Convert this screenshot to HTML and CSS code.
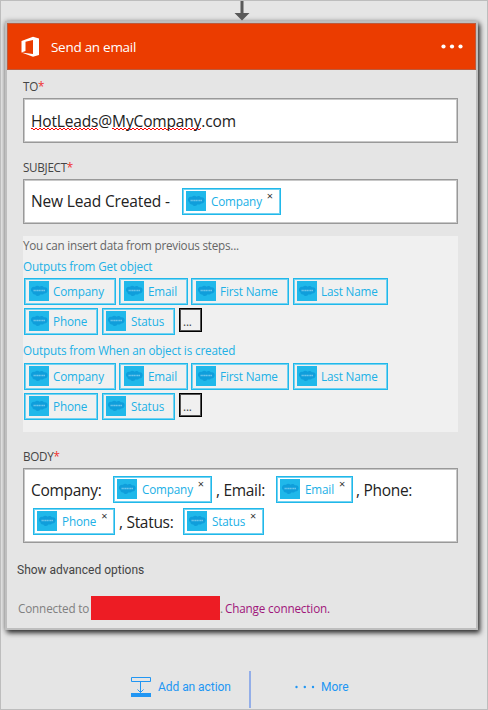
FILE: index.html
```html
<!DOCTYPE html>
<html lang="en">
<head>
<meta charset="utf-8">
<title>Send an email</title>
<link rel="stylesheet" href="styles.css">
</head>
<body>
<svg class="defs" width="0" height="0" aria-hidden="true">
  <symbol id="sf" viewBox="0 0 20 20">
    <rect width="20" height="20" fill="#20b8ea"/>
    <path d="M2 9.500C1.600 7.200 3.500 5.400 5.800 5.900C7.200 4.300 9.400 4.400 10.400 5.700C12 4.500 14 4.800 14.800 6.300C17 5.700 18.800 7 18.600 9.200C18.400 11.500 16.800 12.700 15 12.400C14.200 13.600 12.700 13.900 11.600 13.300C10.400 15.400 7.400 15.500 6.400 13.400C4.600 13.700 3.300 12.700 3.400 11.300C2.600 11 2.200 10.400 2 9.500Z" fill="#0f9edb"/>
    <path d="M4.500 9.500h11.500" stroke="#8fd3f0" stroke-width="1.600" stroke-dasharray="1.400 .3" opacity=".75"/>
  </symbol>
</svg>
<main class="canvas">
  <svg class="arrow" width="16" height="20" viewBox="0 0 16 20"><path d="M6.500 0h3v12H15.500L8 19.500L.5 12H6.500Z" fill="#595959"/></svg>
  <section class="card">
    <header class="head">
      <svg class="office" width="19" height="22" viewBox="0 0 19 22"><path fill="#fff" fill-rule="evenodd" d="M0.500 5L12 .8L18 2.500V19L12 20.800L.5 16.600L12 18V4L4.500 5.800V15L.5 16.600Z"/></svg>
      <h1 class="title"><span class="t-title">Send an email</span></h1>
      <svg class="dots" width="22" height="5" viewBox="0 0 22 5" fill="#fff"><circle cx="2.500" cy="2.500" r="2.100"/><circle cx="11" cy="2.500" r="2.100"/><circle cx="19.500" cy="2.500" r="2.100"/></svg>
    </header>
    <div class="form">
      <div class="label l-to"><span>TO</span><i>*</i></div>
      <div class="input"><span class="big t-mail"><span class="sq">HotLeads</span>@<span class="sq">MyCompany</span>.com</span></div>
      <div class="label l-subject"><span>SUBJECT</span><i>*</i></div>
      <div class="input"><span class="big w-new">New Lead Created -</span><span class="chip x c-company"><svg class="ico"><use href="#sf"/></svg><span>Company</span><b>×</b></span></div>
      <div class="panel">
        <p class="hint">You can insert data from previous steps...</p>
        <p class="out">Outputs from Get object</p>
        <div class="chips">
          <span class="chip p-company"><svg class="ico"><use href="#sf"/></svg><span>Company</span></span><span class="chip p-email"><svg class="ico"><use href="#sf"/></svg><span>Email</span></span><span class="chip p-first"><svg class="ico"><use href="#sf"/></svg><span>First Name</span></span><span class="chip p-last"><svg class="ico"><use href="#sf"/></svg><span>Last Name</span></span>
        </div>
        <div class="chips">
          <span class="chip p-phone"><svg class="ico"><use href="#sf"/></svg><span>Phone</span></span><span class="chip p-status"><svg class="ico"><use href="#sf"/></svg><span>Status</span></span><span class="more">...</span>
        </div>
        <p class="out out2">Outputs from When an object is created</p>
        <div class="chips">
          <span class="chip p-company"><svg class="ico"><use href="#sf"/></svg><span>Company</span></span><span class="chip p-email"><svg class="ico"><use href="#sf"/></svg><span>Email</span></span><span class="chip p-first"><svg class="ico"><use href="#sf"/></svg><span>First Name</span></span><span class="chip p-last"><svg class="ico"><use href="#sf"/></svg><span>Last Name</span></span>
        </div>
        <div class="chips">
          <span class="chip p-phone"><svg class="ico"><use href="#sf"/></svg><span>Phone</span></span><span class="chip p-status"><svg class="ico"><use href="#sf"/></svg><span>Status</span></span><span class="more">...</span>
        </div>
      </div>
      <div class="label l-body"><span>BODY</span><i>*</i></div>
      <div class="input body">
        <div class="line"><span class="big w-co">Company:</span><span class="chip x c-company"><svg class="ico"><use href="#sf"/></svg><span>Company</span><b>×</b></span><span class="big w-em">, Email:</span><span class="chip x c-email"><svg class="ico"><use href="#sf"/></svg><span>Email</span><b>×</b></span><span class="big w-ph">, Phone:</span></div>
        <div class="line line2"><span class="chip x c-phone"><svg class="ico"><use href="#sf"/></svg><span>Phone</span><b>×</b></span><span class="big w-st">, Status:</span><span class="chip x c-status"><svg class="ico"><use href="#sf"/></svg><span>Status</span><b>×</b></span></div>
      </div>
    </div>
    <div class="advanced">Show advanced options</div>
    <div class="conn"><span class="w-conn">Connected to</span><span class="redact"></span><span class="dot">.</span><a class="t-change">Change connection.</a></div>
  </section>
  <footer class="actions">
    <a class="add"><svg width="20" height="20" viewBox="0 0 20 20" fill="none" stroke="#2196f3"><path d="M.5 .5h19v4H.5ZM9.500 4.500v11M6.500 12.500l3 3l3-3"/><path d="M0 16h20v4H0Z" fill="#2196f3" stroke="none"/></svg><span>Add an action</span></a>
    <a class="moreact"><svg width="20" height="4" viewBox="0 0 20 4" fill="#2196f3"><circle cx="1.500" cy="2" r="1.200"/><circle cx="9.800" cy="2" r="1.200"/><circle cx="18" cy="2" r="1.200"/></svg><span>More</span></a>
  </footer>
</main>
</body>
</html>
```
FILE: styles.css
```css
* { box-sizing: border-box; }
body { margin: 0; font-family: "Open Sans", "Noto Sans", sans-serif; font-size: 11.7px; letter-spacing: -.15px; color: #444; }
h1, p { margin: 0; font-weight: 400; }
span, a { white-space: nowrap; }
.defs { display: block; height: 0; }
.canvas { width: 488px; height: 710px; background: #e5e5e5; border: 1px solid #bdbdbd; overflow: hidden; }
.arrow { display: block; margin-left: 233px; height: 20px; }
.card { width: 473px; height: 609px; margin-left: 4px; border: 2px solid #bebebe; background: #e5e5e5; box-shadow: 2px 3px 5px 0 rgba(0,0,0,.75), 0 0 5px rgba(0,0,0,.3); }
.head { display: flex; align-items: center; height: 47px; padding: 1px 12px 0 13px; background: #eb3c00; border: 1px solid #bd5a3c; }
.title { flex: 1; margin-left: 11px; font-size: 13.5px; letter-spacing: -.28px; line-height: 20px; color: #fff; }
.dots { margin-bottom: 2px; }
.form { width: 435px; margin-left: 16px; }
.label { display: flex; line-height: 16px; color: #444; letter-spacing: -.3px; }
.label i { font-style: normal; color: #f03030; }
.l-to { height: 28px; padding-top: 8px; }
.l-subject { height: 36px; padding-top: 16px; }
.l-body { height: 36px; padding-top: 16px; }
.input { display: flex; align-items: center; height: 45px; padding-left: 7px; border: 1px solid #999; outline: 1px solid #c8c8c8; outline-offset: -2px; background: #fff; }
.big { flex: none; font-size: 15.5px; line-height: 24px; letter-spacing: -.15px; color: #222; }
.w-new { width: 151px; padding-bottom: 2px; }
.sq { background: repeating-linear-gradient(90deg, #f00 0 2px, transparent 2px 4px) 0 18px / 100% 1px no-repeat, repeating-linear-gradient(90deg, transparent 0 2px, #f00 2px 4px) 0 19px / 100% 1px no-repeat; }
.chip { display: inline-flex; flex: none; align-items: center; height: 27px; padding-left: 4px; border: 1px solid #20b8ea; outline: 1px solid #74d2f1; outline-offset: -2px; color: #20b0e6; }
.chip > span { padding-bottom: 2px; }
.ico { width: 20px; height: 20px; flex: none; align-self: flex-start; margin: 2px 4px 0 0; }
.x { padding-left: 3px; }
.x .ico { margin-right: 5px; }
.line .chip > span { padding-bottom: 1px; }
.chip b { font-weight: 400; font-size: 11px; line-height: 10px; color: #333; align-self: flex-start; margin: 2px 0 0 5px; }
.c-company { width: 99px; }
.c-email { width: 77px; }
.c-phone { width: 82px; }
.c-status { width: 81px; }
.panel { height: 196px; margin-top: 12px; background: #f0f0f0; }
.hint { height: 20px; line-height: 18px; letter-spacing: -.23px; color: #666; }
.out { height: 22px; line-height: 20px; color: #20b0e6; }
.out2 { height: 25px; line-height: 25px; }
.chips { display: flex; height: 30px; padding-left: 1px; }
.p-company { width: 92px; margin-right: 3px; }
.p-email { width: 69px; margin-right: 3px; }
.p-first { width: 98px; margin-right: 4px; }
.p-last { width: 95px; }
.p-phone { width: 74px; margin-right: 4px; }
.p-status { width: 73px; margin-right: 4px; }
.p-status, .p-last { padding-left: 3px; }
.p-status .ico { margin-right: 5px; }
.more { width: 23px; height: 24px; border: 1px solid #000; outline: 1px solid #555; outline-offset: -2px; padding-left: 3px; line-height: 25px; color: #444; }
.body { display: block; height: 75px; padding-top: 7px; }
.line { display: flex; align-items: center; height: 27px; }
.line .big { letter-spacing: -.3px; }
.line2 { margin: 5px 0 0 2px; }
.w-co { width: 82px; }
.w-em { width: 64px; padding-left: 4px; }
.w-ph { padding-left: 3px; }
.w-st { width: 68px; padding-left: 4px; }
.advanced { margin: 17px 0 0 10px; height: 20px; line-height: 20px; font-family: Roboto, sans-serif; font-size: 12px; letter-spacing: 0; color: #444; }
.conn { display: flex; height: 24px; margin: 16px 0 0 11px; line-height: 25px; color: #808080; }
.w-conn { width: 73px; }
.redact { width: 129px; height: 24px; background: #ed1c24; }
.dot { width: 5px; }
.t-change { color: #a0157a; }
.actions { display: flex; height: 37px; margin-top: 41px; color: #2196f3; font-family: Roboto, sans-serif; font-size: 12px; letter-spacing: -.05px; }
.add { display: flex; align-items: center; width: 250px; padding: 0 0 5px 130px; border-right: 2px solid #93aee8; }
.add svg { margin-right: 7px; }
.moreact { display: flex; align-items: center; padding: 0 0 5px 44px; }
.moreact svg { margin-right: 6px; }
```
